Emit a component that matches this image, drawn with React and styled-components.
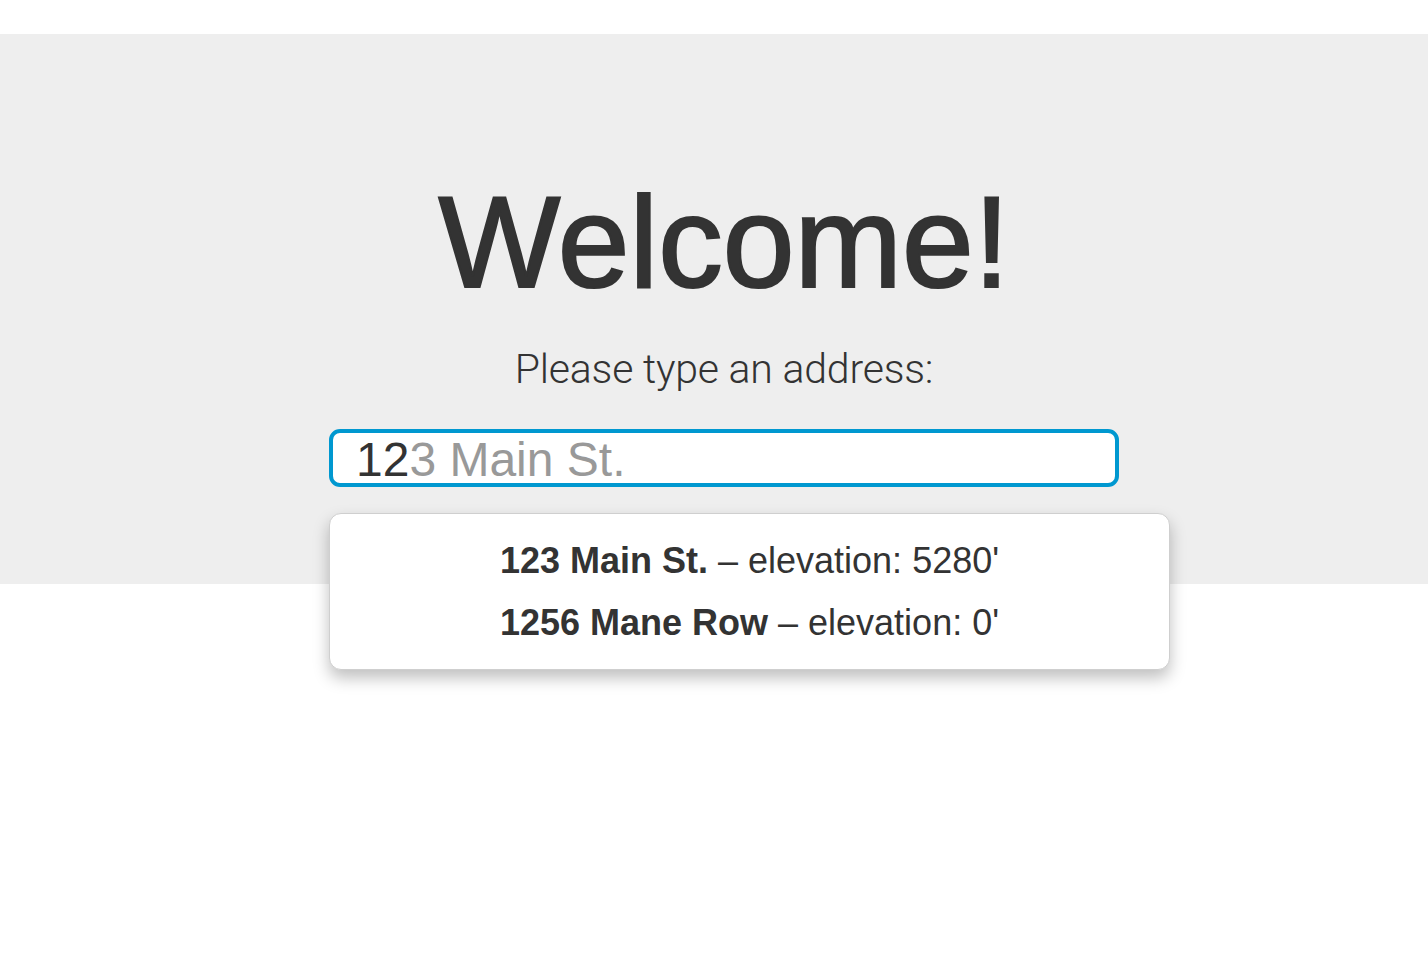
import React from 'react';
import styled, { createGlobalStyle } from 'styled-components';

const GlobalStyle = createGlobalStyle`
  body {
    margin: 0;
    background: #fff;
    font-family: 'Liberation Sans', Arial, sans-serif;
    color: #333;
  }
`;

const Page = styled.div`
  padding-top: 34px;
  min-height: 926px;
`;

const Jumbotron = styled.section`
  background: #eee;
  padding: 137px 0 97px;
`;

const Container = styled.div`
  width: 790px;
  margin: 0 auto;
  padding-left: 20px;
  text-align: center;
`;

const Title = styled.h1`
  margin: 0;
  font-size: 129px;
  line-height: 143px;
  font-weight: 400;
  color: #333;
  -webkit-text-stroke: 2.2px #333;
`;

const Lead = styled.p`
  margin: 32px 0 0;
  font-family: Roboto, 'Liberation Sans', sans-serif;
  font-weight: 300;
  font-size: 41px;
  line-height: 47px;
  letter-spacing: -0.2px;
  color: #333;
`;

const SearchBox = styled.div`
  position: relative;
  margin-top: 36px;
  text-align: left;
`;

const Field = styled.div`
  border: 4px solid #0098d0;
  border-radius: 11px;
  background: #fff;
  padding: 1px 0 0 23px;
  height: 49px;
  font-size: 48px;
  line-height: 52px;
  white-space: nowrap;
`;

const Typed = styled.span`
  color: #333;
`;

const Hint = styled.span`
  color: #999;
`;

const Menu = styled.ul`
  position: absolute;
  top: 84px;
  left: 0;
  width: 839px;
  margin: 0;
  padding: 16px 0 15px;
  list-style: none;
  background: #fff;
  border: 1px solid #cfcfcf;
  border-radius: 12px;
  box-shadow: 0 8px 16px rgba(0, 0, 0, 0.25);
`;

const Item = styled.li`
  text-align: center;
  font-size: 36px;
  line-height: 62px;
  color: #333;
  b {
    font-weight: 700;
  }
`;

const results = [
  { name: '123 Main St.', elevation: 5280 },
  { name: '1256 Mane Row', elevation: 0 },
];

const App = () => {
  return (
    <>
      <GlobalStyle />
      <Page>
        <Jumbotron>
          <Container>
            <Title>Welcome!</Title>
            <Lead>Please type an address:</Lead>
            <SearchBox>
              <Field>
                <Typed>12</Typed>
                <Hint>3 Main St.</Hint>
              </Field>
              <Menu>
                {results.map((r) => (
                  <Item key={r.name}>
                    <b>{r.name}</b> – elevation: {r.elevation}'
                  </Item>
                ))}
              </Menu>
            </SearchBox>
          </Container>
        </Jumbotron>
      </Page>
    </>
  );
};

export default App;
